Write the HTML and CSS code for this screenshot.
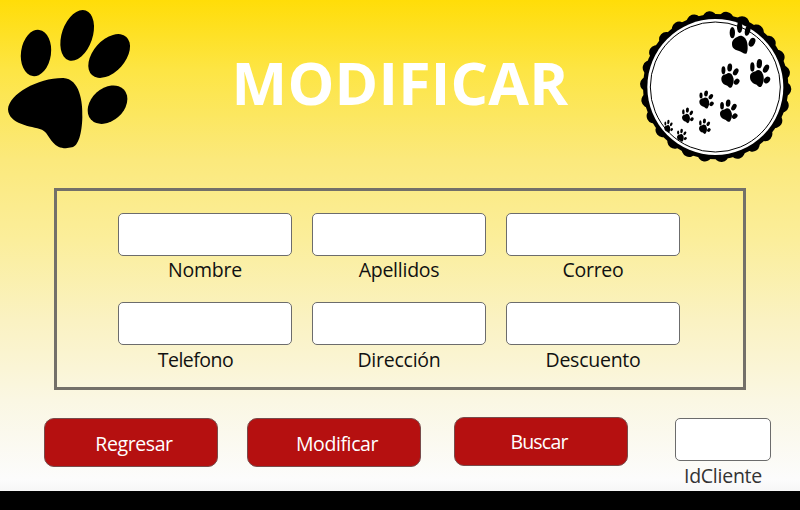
FILE: index.html
```
<!DOCTYPE html>
<html lang="es">
<head>
<meta charset="utf-8">
<title>Modificar</title>
<link rel="stylesheet" href="styles.css">
</head>
<body>
<header class="header">
  <svg class="paw" viewBox="0 0 450 480">
    <ellipse cx="108" cy="159" rx="45" ry="70" transform="rotate(8 108 159)"/>
    <ellipse cx="231.500" cy="106" rx="46" ry="79" transform="rotate(19 231.500 106)"/>
    <ellipse cx="327.500" cy="168" rx="48" ry="77" transform="rotate(42 327.500 168)"/>
    <ellipse cx="322.500" cy="314" rx="49" ry="67" transform="rotate(48 322.500 314)"/>
    <path d="M24 328C27 282 115 233 190 234C239 237 249 305 247 352C246 400 235 439 216 442C200 446 187 445 175 440C151 428 145 398 126 389C93 379 26 373 24 328Z"/>
  </svg>
  <h1 class="title">MODIFICAR</h1>
  <svg class="seal" viewBox="0 0 510 510">
    <defs>
      <g id="print">
        <ellipse cx="7" cy="23" rx="6.500" ry="14"/>
        <ellipse cx="28" cy="13" rx="8" ry="14" transform="rotate(5 28 13)"/>
        <ellipse cx="48" cy="28" rx="8" ry="13" transform="rotate(28 48 28)"/>
        <ellipse cx="51" cy="62" rx="8.500" ry="11" transform="rotate(38 51 62)"/>
        <path d="M0 53C0 40 10 38 17 36C23 29 34 32 38 43C43 52 42 67 37 76C33 88 26 83 20 76C9 73 0 66 0 53Z"/>
      </g>
    </defs>
    <circle cx="257" cy="260" r="218"/>
    <circle class="scallops" cx="257" cy="260" r="205" pathLength="26" transform="rotate(-95 257 260)"/>
    <circle class="disc" cx="256" cy="261" r="204"/>
    <circle class="rim" cx="256" cy="261" r="195"/>
    <ellipse cx="307" cy="98" rx="8" ry="17"/>
    <ellipse cx="329" cy="82" rx="8" ry="17"/>
    <ellipse cx="353" cy="91" rx="8" ry="17" transform="rotate(15 353 91)"/>
    <ellipse cx="366" cy="127" rx="9" ry="14" transform="rotate(25 366 127)"/>
    <path d="M306 132C306 119 315 114 323 110C334 103 347 111 351 126C354 139 354 155 349 161C341 162 334 155 325 152C312 149 306 143 306 132Z"/>
    <use href="#print" transform="translate(360 178)"/>
    <use href="#print" transform="translate(274 191) scale(.9 .87)"/>
    <use href="#print" transform="translate(270 299) scale(.87 .8)"/>
    <use href="#print" transform="translate(208 272) scale(.72 .64)"/>
    <use href="#print" transform="translate(156 323) scale(.58 .56)"/>
    <use href="#print" transform="translate(207 356) scale(.58 .55)"/>
    <use href="#print" transform="translate(103 360) scale(.43 .46)"/>
    <use href="#print" transform="translate(141 387) scale(.49 .46)"/>
  </svg>
</header>
<main>
  <section class="panel">
    <label class="field"><input class="box"><span class="name">Nombre</span></label>
    <label class="field"><input class="box"><span class="name">Apellidos</span></label>
    <label class="field"><input class="box"><span class="name">Correo</span></label>
    <label class="field"><input class="box"><span class="name lower phone">Telefono</span></label>
    <label class="field"><input class="box"><span class="name lower">Dirección</span></label>
    <label class="field"><input class="box"><span class="name lower">Descuento</span></label>
  </section>
  <section class="actions">
    <button class="button back">Regresar</button>
    <button class="button modify">Modificar</button>
    <button class="button search">Buscar</button>
    <label class="field client"><input class="box"><span class="name">IdCliente</span></label>
  </section>
</main>
<footer class="footer"></footer>
</body>
</html>
```
FILE: styles.css
```
* { box-sizing: border-box; }
body {
  margin: 0;
  width: 800px;
  height: 510px;
  overflow: hidden;
  display: flex;
  flex-direction: column;
  font-family: "Open Sans", "Noto Sans", sans-serif;
  background: linear-gradient(#ffdd08 0, #fde544 70px, #fbe97c 160px, #fbee9b 240px, #faf2c2 320px, #faf7e3 400px, #fcfcfc 480px, #f6f6f6 491px);
}
.header {
  display: flex;
  justify-content: space-between;
  height: 188px;
}
.paw { width: 150px; height: 160px; }
.title {
  margin: 42px 0 0 20px;
  width: 340px;
  text-align: center;
  white-space: nowrap;
  color: #fff;
  font-size: 59px;
  line-height: 80px;
  font-weight: 700;
  letter-spacing: .2px;
}
.seal { width: 170px; height: 170px; }
.scallops {
  fill: none;
  stroke: #000;
  stroke-width: 44;
  stroke-linecap: round;
  stroke-dasharray: .001 .999;
}
.disc { fill: #fff; }
.rim { fill: none; stroke: #000; stroke-width: 3; }
.panel {
  width: 692px;
  height: 202px;
  margin-left: 54px;
  padding: 22px 0 0 61px;
  border: 3px solid #737069;
  display: grid;
  grid-template-columns: repeat(3, 174px);
  grid-auto-rows: 89px;
  column-gap: 20px;
  align-content: start;
}
.field { display: flex; flex-direction: column; align-items: center; }
.box {
  width: 100%;
  height: 43px;
  flex: none;
  border: 1px solid #6c6c6c;
  border-radius: 5px;
  background: #fff;
}
.name {
  font-size: 19.5px;
  line-height: 28px;
  letter-spacing: -.25px;
  color: #111;
}
.lower { line-height: 30px; }
.phone { margin-right: 19px; letter-spacing: -.5px; }
.actions {
  display: flex;
  align-items: flex-start;
  height: 101px;
  padding: 27px 0 0 44px;
}
.button {
  width: 174px;
  height: 49px;
  padding: 2px 0 0 6px;
  border: 1px solid #784b4b;
  border-radius: 10px;
  background: #b51010;
  color: #fff;
  font: 19.5px "Open Sans", "Noto Sans", sans-serif;
  letter-spacing: -.4px;
}
.back { margin-top: 1px; }
.modify { margin: 1px 33px 0 29px; }
.search { padding: 0 4px 1px 0; letter-spacing: -.8px; }
.client { width: 96px; margin: 1px 0 0 47px; }
.client .name { color: #333; line-height: 30px; }
.footer { flex: 1; background: #000; }
```
